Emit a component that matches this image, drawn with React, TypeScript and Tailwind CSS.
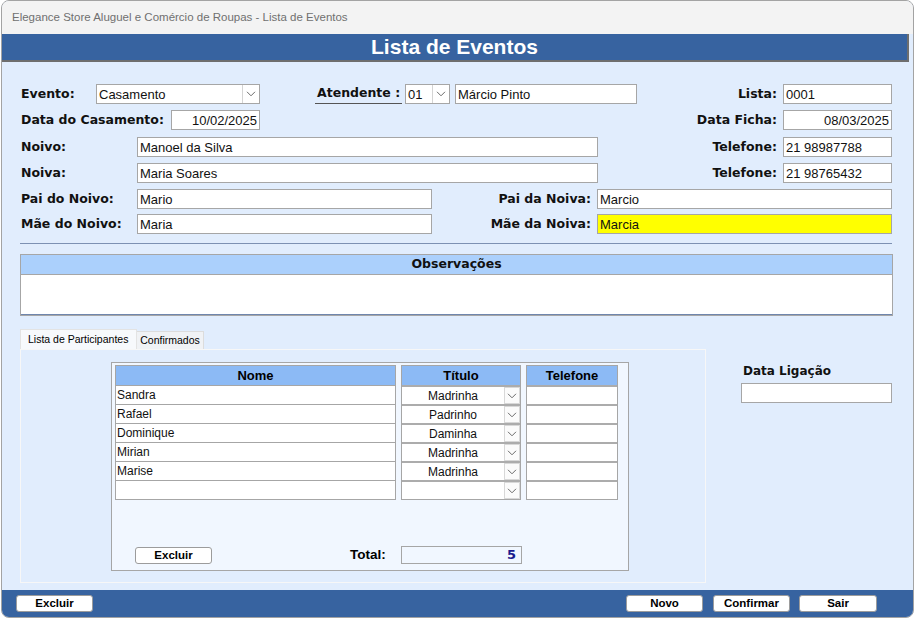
import React from 'react';

const LABEL = "font-['DejaVu_Sans',sans-serif] font-bold text-[12.5px] text-[#111] leading-none whitespace-nowrap";
const TEXT = "font-['Liberation_Sans',sans-serif] text-[13px] text-[#111] leading-none whitespace-nowrap";
const BTN =
    "h-[17px] bg-white border border-[#9c9c9c] rounded-[3px] flex items-center justify-center font-['Liberation_Sans',sans-serif] font-bold text-[11.5px] text-black";

function Chevron() {
    return (
        <svg width="10" height="6" viewBox="0 0 10 6" fill="none">
            <path d="M1 0.8l4 4 4-4" stroke="#6b6b6b" strokeWidth="1" />
        </svg>
    );
}

function Input({ w, value, right, bg }: { w: string; value: string; right?: boolean; bg?: string }) {
    return (
        <div
            className={`${w} h-[20px] shrink-0 border border-[#a6a6a6] ${bg ?? 'bg-white'} flex items-center px-[2px] ${
                right ? 'justify-end' : ''
            } ${TEXT}`}
        >
            {value}
        </div>
    );
}

function Select({ w, value }: { w: string; value: string }) {
    return (
        <div className={`${w} h-[20px] shrink-0 border border-[#a6a6a6] bg-white flex items-stretch`}>
            <div className={`flex-1 flex items-center px-[2px] ${TEXT}`}>{value}</div>
            <div className="w-[17px] border-l border-[#d4d4d4] flex items-center justify-center">
                <Chevron />
            </div>
        </div>
    );
}

function Label({ w, text, right }: { w: string; text: string; right?: boolean }) {
    return <div className={`${w} shrink-0 ${right ? 'text-right' : ''} ${LABEL}`}>{text}</div>;
}

const participants = [
    { nome: 'Sandra', titulo: 'Madrinha' },
    { nome: 'Rafael', titulo: 'Padrinho' },
    { nome: 'Dominique', titulo: 'Daminha' },
    { nome: 'Mirian', titulo: 'Madrinha' },
    { nome: 'Marise', titulo: 'Madrinha' },
    { nome: '', titulo: '' },
];

const GRID_HEAD =
    "h-[19px] bg-[#8cbaf5] flex items-center justify-center font-['Liberation_Sans',sans-serif] font-bold text-[13px] text-black";
const GRID_TEXT = "font-['Liberation_Sans',sans-serif] text-[12px] text-[#111] whitespace-nowrap";

function Grid() {
    return (
        <div className="flex gap-[5px]">
            <div className="w-[281px] border border-[#a6a6a6] bg-white">
                <div className={GRID_HEAD}>Nome</div>
                {participants.map((p, i) => (
                    <div key={i} className={`h-[19px] border-t border-[#a6a6a6] flex items-center px-[1px] ${GRID_TEXT}`}>
                        {p.nome}
                    </div>
                ))}
            </div>
            <div className="w-[120px] border border-[#a6a6a6] bg-white">
                <div className={GRID_HEAD}>Título</div>
                {participants.map((p, i) => (
                    <div key={i} className="h-[19px] border-t-2 border-[#acacac] flex items-stretch">
                        <div className={`flex-1 flex items-center justify-center ${GRID_TEXT}`}>{p.titulo}</div>
                        <div className="w-[16px] border border-[#d8d8d8] bg-[#fbfbfb] flex items-center justify-center">
                            <Chevron />
                        </div>
                    </div>
                ))}
            </div>
            <div className="w-[92px] border border-[#a6a6a6] bg-white">
                <div className={GRID_HEAD}>Telefone</div>
                {participants.map((_, i) => (
                    <div key={i} className="h-[19px] border-t-2 border-[#acacac]" />
                ))}
            </div>
        </div>
    );
}

export default function App() {
    return (
        <div className="w-[917px] h-[618px] bg-white overflow-hidden">
            <div className="ml-[1px] w-[913px] h-[618px] border border-[#a3a3a3] rounded-[8px] overflow-hidden flex flex-col bg-[#e1edfd]">
                {/* title bar */}
                <div className="h-[33px] shrink-0 bg-[#f3f3f3] flex items-center pl-[10px] font-['Liberation_Sans',sans-serif] text-[11.5px] text-[#707070]">
                    Elegance Store Aluguel e Comércio de Roupas - Lista de Eventos
                </div>

                {/* header */}
                <div className="h-[28px] shrink-0 mr-[4px] bg-[#3763a0] border-b-2 border-r-2 border-[#6e6e6e] flex items-center justify-center font-['Liberation_Sans',sans-serif] font-bold text-[21px] text-white">
                    Lista de Eventos
                </div>

                {/* body */}
                <div className="flex-1 flex flex-col">
                    <div className="mt-[22px] h-[20px] flex items-center">
                        <div className="ml-[19px]" />
                        <Label w="w-[75px]" text="Evento:" />
                        <Select w="w-[164px]" value="Casamento" />
                        <div className={`ml-[55px] w-[87px] h-[20px] shrink-0 border-b border-[#555] flex items-center pl-[2px] ${LABEL}`}>
                            Atendente :
                        </div>
                        <div className="ml-[3px]" />
                        <Select w="w-[45px]" value="01" />
                        <div className="ml-[5px]" />
                        <Input w="w-[182px]" value="Márcio Pinto" />
                        <Label w="w-[140px]" text="Lista:" right />
                        <div className="ml-[6px]" />
                        <Input w="w-[109px]" value="0001" />
                    </div>

                    <div className="mt-[6px] h-[20px] flex items-center">
                        <div className="ml-[19px]" />
                        <Label w="w-[150px]" text="Data do Casamento:" />
                        <Input w="w-[89px]" value="10/02/2025" right />
                        <Label w="w-[517px]" text="Data Ficha:" right />
                        <div className="ml-[6px]" />
                        <Input w="w-[109px]" value="08/03/2025" right />
                    </div>

                    <div className="mt-[7px] h-[20px] flex items-center">
                        <div className="ml-[19px]" />
                        <Label w="w-[116px]" text="Noivo:" />
                        <Input w="w-[461px]" value="Manoel da Silva" />
                        <Label w="w-[179px]" text="Telefone:" right />
                        <div className="ml-[6px]" />
                        <Input w="w-[109px]" value="21 98987788" />
                    </div>

                    <div className="mt-[6px] h-[20px] flex items-center">
                        <div className="ml-[19px]" />
                        <Label w="w-[116px]" text="Noiva:" />
                        <Input w="w-[461px]" value="Maria Soares" />
                        <Label w="w-[179px]" text="Telefone:" right />
                        <div className="ml-[6px]" />
                        <Input w="w-[109px]" value="21 98765432" />
                    </div>

                    <div className="mt-[6px] h-[20px] flex items-center">
                        <div className="ml-[19px]" />
                        <Label w="w-[116px]" text="Pai do Noivo:" />
                        <Input w="w-[295px]" value="Mario" />
                        <Label w="w-[159px]" text="Pai da Noiva:" right />
                        <div className="ml-[6px]" />
                        <Input w="w-[295px]" value="Marcio" />
                    </div>

                    <div className="mt-[5px] h-[20px] flex items-center">
                        <div className="ml-[19px]" />
                        <Label w="w-[116px]" text="Mãe do Noivo:" />
                        <Input w="w-[295px]" value="Maria" />
                        <Label w="w-[159px]" text="Mãe da Noiva:" right />
                        <div className="ml-[6px]" />
                        <Input w="w-[295px]" value="Marcia" bg="bg-[#ffff00]" />
                    </div>

                    <div className="mt-[9px] ml-[18px] w-[872px] h-px bg-[#7d91b3]" />

                    {/* observações */}
                    <div className="mt-[10px] ml-[18px] w-[873px] border border-[#a6a6a6] bg-white">
                        <div className={`h-[20px] bg-[#abd0fc] border-b border-[#a6a6a6] flex items-center justify-center ${LABEL}`}>
                            Observações
                        </div>
                        <div className="h-[40px] border-b border-[#6f86ad]" />
                    </div>

                    {/* lower section */}
                    <div className="mt-[13px] flex">
                        <div className="ml-[18px] w-[686px] flex flex-col">
                            <div className="h-[20px] flex items-end font-['Liberation_Sans',sans-serif] text-[10.5px] text-black">
                                <div className="w-[117px] h-[20px] bg-[#f7f9fc] border border-b-0 border-[#e3e3e3] flex items-center pl-[7px] pt-[1px]">
                                    Lista de Participantes
                                </div>
                                <div className="w-[67px] h-[18px] bg-[#f0f2f5] border border-b-0 border-l-0 border-[#dcdcdc] flex items-center justify-center pt-[1px]">
                                    Confirmados
                                </div>
                            </div>
                            <div className="h-[234px] border border-[#f7f7f7] bg-[#e1edfd]">
                                <div className="mt-[12px] ml-[90px] w-[518px] h-[209px] border border-[#a6a6a6] bg-[#f1f7ff] pl-[3px] pt-[2px]">
                                    <Grid />
                                    <div className="mt-[45px] flex items-center">
                                        <div className={`ml-[20px] w-[77px] ${BTN}`}>Excluir</div>
                                        <div className="ml-[138px] w-[51px] font-['Liberation_Sans',sans-serif] font-bold text-[13.5px] text-black">
                                            Total:
                                        </div>
                                        <div className="w-[121px] h-[18px] border border-[#a6a6a6] bg-[#f1f7ff] flex items-center justify-end pr-[5px] font-['DejaVu_Sans',sans-serif] font-bold text-[13px] text-[#1b1b8f]">
                                            5
                                        </div>
                                    </div>
                                </div>
                            </div>
                        </div>
                        <div className="ml-[35px] flex flex-col">
                            <div className="mt-[36px] pl-[2px] font-['DejaVu_Sans',sans-serif] font-bold text-[12px] text-[#111] leading-none">
                                Data Ligação
                            </div>
                            <div className="mt-[6px]">
                                <Input w="w-[151px]" value="" />
                            </div>
                        </div>
                    </div>
                </div>

                {/* footer */}
                <div className="h-[27px] shrink-0 bg-[#3763a0] flex items-start pt-[5px]">
                    <div className={`ml-[14px] w-[77px] ${BTN}`}>Excluir</div>
                    <div className={`ml-[533px] w-[77px] ${BTN}`}>Novo</div>
                    <div className={`ml-[10px] w-[77px] ${BTN}`}>Confirmar</div>
                    <div className={`ml-[9px] w-[78px] ${BTN}`}>Sair</div>
                </div>
            </div>
        </div>
    );
}
